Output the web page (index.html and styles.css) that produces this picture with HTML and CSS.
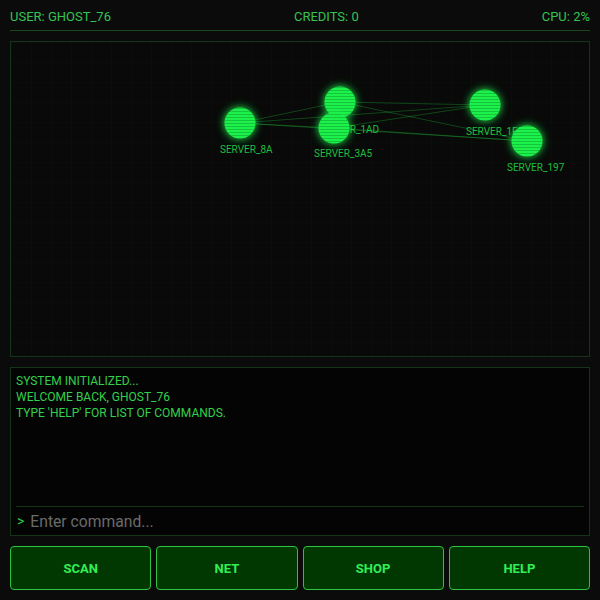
FILE: index.html
```html
<!DOCTYPE html>
<html>
<head>
<meta charset="utf-8">
<link rel="stylesheet" href="styles.css">
</head>
<body>
<div class="app">
  <header class="status">
    <span>USER: GHOST_76</span>
    <span>CREDITS: 0</span>
    <span>CPU: 2%</span>
  </header>
  <section class="map">
    <svg class="net" width="578" height="314" viewBox="0 0 578 314">
      <defs>
        <pattern id="scan" width="4" height="3" patternUnits="userSpaceOnUse">
          <rect width="4" height="1" fill="rgba(0,70,15,0.25)"/>
        </pattern>
        <filter id="glow" x="-80%" y="-80%" width="260%" height="260%">
          <feGaussianBlur stdDeviation="4" result="b"/>
          <feMerge><feMergeNode in="b"/><feMergeNode in="SourceGraphic"/></feMerge>
        </filter>
      </defs>
      <g class="links">
        <line x1="229" y1="81" x2="329" y2="60"/>
        <line x1="229" y1="81" x2="323" y2="86"/>
        <line x1="229" y1="81" x2="474" y2="63"/>
        <line x1="229" y1="81" x2="516" y2="99"/>
        <line x1="329" y1="60" x2="474" y2="63"/>
        <line x1="329" y1="60" x2="516" y2="99"/>
        <line x1="323" y1="86" x2="474" y2="63"/>
        <line x1="323" y1="86" x2="516" y2="99"/>
      </g>
      <g class="node">
        <circle cx="229" cy="81" r="15.5" filter="url(#glow)"/>
        <circle cx="229" cy="81" r="15.5" fill="url(#scan)"/>
        <text x="209" y="111">SERVER_8A</text>
      </g>
      <g class="node">
        <circle cx="329" cy="60" r="15.5" filter="url(#glow)"/>
        <circle cx="329" cy="60" r="15.5" fill="url(#scan)"/>
        <text x="309" y="91">SERVER_1AD</text>
      </g>
      <g class="node">
        <circle cx="323" cy="86" r="15.5" filter="url(#glow)"/>
        <circle cx="323" cy="86" r="15.5" fill="url(#scan)"/>
        <text x="303" y="115">SERVER_3A5</text>
      </g>
      <g class="node">
        <circle cx="474" cy="63" r="15.5" filter="url(#glow)"/>
        <circle cx="474" cy="63" r="15.5" fill="url(#scan)"/>
        <text x="455" y="93">SERVER_1F2</text>
      </g>
      <g class="node">
        <circle cx="516" cy="99" r="15.5" filter="url(#glow)"/>
        <circle cx="516" cy="99" r="15.5" fill="url(#scan)"/>
        <text x="496" y="129">SERVER_197</text>
      </g>
    </svg>
  </section>
  <section class="terminal">
    <div class="log">
      <div>SYSTEM INITIALIZED...</div>
      <div>WELCOME BACK, GHOST_76</div>
      <div>TYPE 'HELP' FOR LIST OF COMMANDS.</div>
    </div>
    <div class="prompt">
      <span class="caret">&gt;</span>
      <input class="cmd" type="text" placeholder="Enter command...">
    </div>
  </section>
  <nav class="actions">
    <button class="btn">SCAN</button>
    <button class="btn">NET</button>
    <button class="btn">SHOP</button>
    <button class="btn">HELP</button>
  </nav>
</div>
</body>
</html>
```

FILE: styles.css
```css
html, body {
  margin: 0;
  padding: 0;
  background: #0b0b0b;
  height: 100%;
}
body {
  font-family: Roboto, "Liberation Sans", sans-serif;
  color: #33cc55;
}
.app {
  box-sizing: border-box;
  height: 600px;
  padding: 10px;
  display: flex;
  flex-direction: column;
  gap: 10px;
}
.status {
  display: flex;
  justify-content: space-between;
  font-size: 13px;
  line-height: 14px;
  padding-bottom: 6px;
  border-bottom: 1px solid #1b461f;
  color: #35c451;
}
.map {
  flex: 1;
  position: relative;
  border: 1px solid #143317;
  background-color: #080908;
  background-image:
    linear-gradient(rgba(0, 255, 65, 0.018) 1px, transparent 1px),
    linear-gradient(90deg, rgba(0, 255, 65, 0.018) 1px, transparent 1px);
  background-size: 20px 20px;
  overflow: hidden;
}
.net {
  position: absolute;
  left: 0;
  top: 0;
  display: block;
}
.links line {
  stroke: rgba(40, 220, 70, 0.28);
  stroke-width: 1;
}
.node circle {
  fill: #1ff04b;
}
.node circle + circle {
  fill: url(#scan);
}
.node text {
  fill: #1fbf3f;
  font-family: Roboto, "Liberation Sans", sans-serif;
  font-size: 10px;
}
.terminal {
  height: 167px;
  flex: none;
  border: 1px solid #143317;
  background: #040404;
  display: flex;
  flex-direction: column;
}
.log {
  flex: 1;
  padding: 5px 5px 0;
  font-size: 12px;
  line-height: 16px;
  color: #33d04b;
}
.prompt {
  margin: 0 5px;
  border-top: 1px solid #153517;
  height: 28px;
  display: flex;
  align-items: center;
  gap: 6px;
}
.caret {
  color: #2ecc4a;
  font-size: 14px;
  padding-left: 1px;
}
.cmd {
  flex: 1;
  background: transparent;
  border: none;
  outline: none;
  color: #33cc55;
  font-family: Roboto, "Liberation Sans", sans-serif;
  font-size: 15.7px;
  padding: 0;
}
.cmd::placeholder {
  color: #6b6b6b;
}
.actions {
  display: grid;
  grid-template-columns: repeat(4, 1fr);
  gap: 5px;
  height: 44px;
  flex: none;
}
.btn {
  background: #013701;
  border: 1.5px solid #2fc43f;
  border-radius: 4px;
  color: #33ee55;
  font-family: Roboto, "Liberation Sans", sans-serif;
  font-weight: bold;
  font-size: 13px;
}
```
